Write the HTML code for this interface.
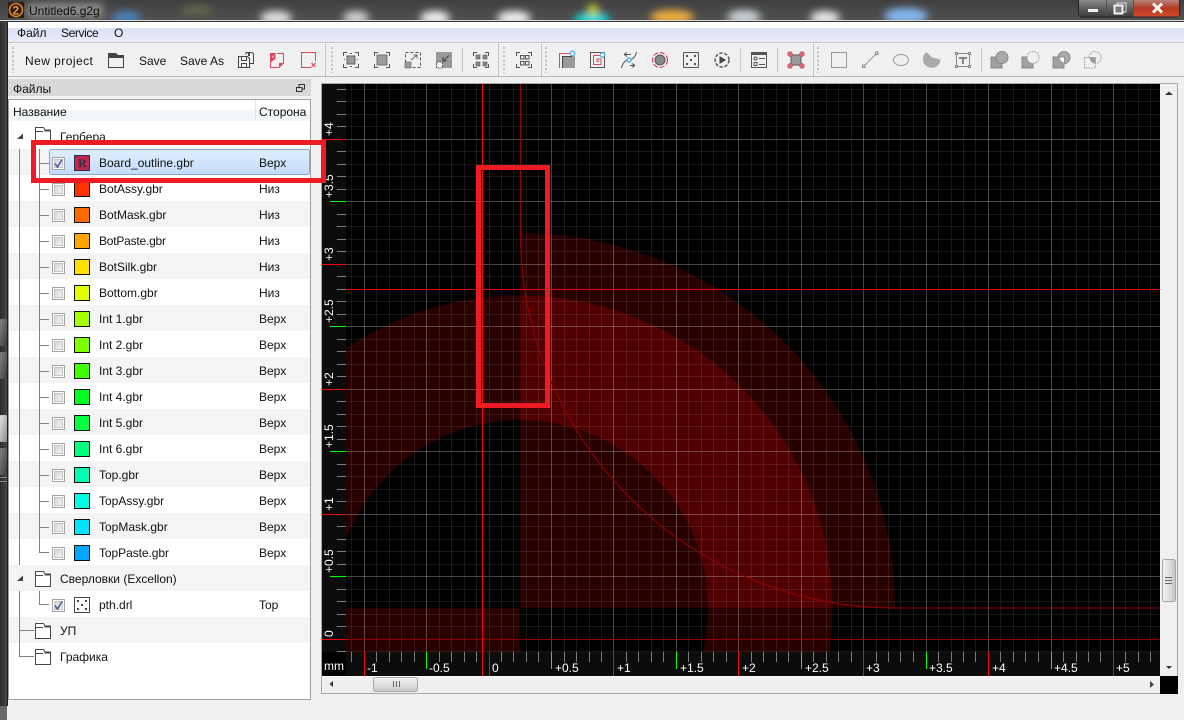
<!DOCTYPE html>
<html><head><meta charset="utf-8"><title>Untitled6.g2g</title>
<style>
html,body{margin:0;padding:0;background:#f0f0f0;width:1184px;height:720px;overflow:hidden}
svg{display:block;font-family:"Liberation Sans","Noto Sans CJK SC",sans-serif;font-size:12px}
</style></head><body>
<svg width="1184" height="720" viewBox="0 0 1184 720" xmlns="http://www.w3.org/2000/svg">
<defs>
<linearGradient id="tb" x1="0" y1="0" x2="0" y2="1"><stop offset="0" stop-color="#404040"/><stop offset="1" stop-color="#505050"/></linearGradient>
<linearGradient id="menu" x1="0" y1="0" x2="0" y2="1"><stop offset="0" stop-color="#fff"/><stop offset=".28" stop-color="#fff"/><stop offset=".32" stop-color="#dce1f3"/><stop offset="1" stop-color="#e9ecf8"/></linearGradient>
<linearGradient id="sel" x1="0" y1="0" x2="0" y2="1"><stop offset="0" stop-color="#e0eefd"/><stop offset="1" stop-color="#c2dcfc"/></linearGradient>
<linearGradient id="hd" x1="0" y1="0" x2="0" y2="1"><stop offset="0" stop-color="#fff"/><stop offset=".45" stop-color="#fff"/><stop offset=".5" stop-color="#f3f6f9"/><stop offset="1" stop-color="#f3f6f9"/></linearGradient>
<linearGradient id="cb" x1="0" y1="0" x2="1" y2="1"><stop offset="0" stop-color="#d4d4d4"/><stop offset="1" stop-color="#f4f4f4"/></linearGradient>
<linearGradient id="thH" x1="0" y1="0" x2="0" y2="1"><stop offset="0" stop-color="#f2f2f2"/><stop offset=".5" stop-color="#e0e0e0"/><stop offset="1" stop-color="#c8c8c8"/></linearGradient>
<linearGradient id="thV" x1="0" y1="0" x2="1" y2="0"><stop offset="0" stop-color="#f2f2f2"/><stop offset=".5" stop-color="#e0e0e0"/><stop offset="1" stop-color="#c4c4c4"/></linearGradient>
<linearGradient id="btn" x1="0" y1="0" x2="0" y2="1"><stop offset="0" stop-color="#8a8a8a"/><stop offset=".5" stop-color="#5f5f5f"/><stop offset="1" stop-color="#3e3e3e"/></linearGradient>
<linearGradient id="cls" x1="0" y1="0" x2="0" y2="1"><stop offset="0" stop-color="#b5827a"/><stop offset=".5" stop-color="#b63a24"/><stop offset="1" stop-color="#d24a2c"/></linearGradient>
<linearGradient id="lb" x1="0" y1="0" x2="1" y2="0"><stop offset="0" stop-color="#2c2c2c"/><stop offset="1" stop-color="#484848"/></linearGradient>
<linearGradient id="lbb" x1="0" y1="0" x2="1" y2="1"><stop offset="0" stop-color="#808080"/><stop offset="1" stop-color="#3c3c3c"/></linearGradient>
<linearGradient id="lbw" x1="0" y1="0" x2="1" y2="1"><stop offset="0" stop-color="#e4e4e4"/><stop offset="1" stop-color="#8a8a8a"/></linearGradient>
<filter id="bl" x="0" y="0" width="1184" height="40" filterUnits="userSpaceOnUse"><feGaussianBlur stdDeviation="4"/></filter>
<clipPath id="cTitle"><rect x="0" y="0" width="1184" height="20"/></clipPath>
<clipPath id="cCanvas"><rect x="346" y="84" width="814" height="568"/></clipPath>
<clipPath id="cTickB"><rect x="346" y="652" width="814" height="10"/></clipPath>
<clipPath id="cTickL"><rect x="337" y="84" width="9" height="568"/></clipPath>
<path id="vm" d="M351.5 84V676M376.5 84V676M389.5 84V676M401.5 84V676M414.5 84V676M439.5 84V676M451.5 84V676M464.5 84V676M476.5 84V676M501.5 84V676M513.5 84V676M526.5 84V676M538.5 84V676M564.5 84V676M576.5 84V676M589.5 84V676M601.5 84V676M626.5 84V676M638.5 84V676M651.5 84V676M663.5 84V676M688.5 84V676M701.5 84V676M713.5 84V676M726.5 84V676M751.5 84V676M763.5 84V676M776.5 84V676M788.5 84V676M813.5 84V676M826.5 84V676M838.5 84V676M851.5 84V676M876.5 84V676M888.5 84V676M900.5 84V676M913.5 84V676M938.5 84V676M951.5 84V676M963.5 84V676M975.5 84V676M1000.5 84V676M1013.5 84V676M1025.5 84V676M1038.5 84V676M1063.5 84V676M1076.5 84V676M1088.5 84V676M1100.5 84V676M1125.5 84V676M1138.5 84V676M1150.5 84V676"/>
<path id="hm" d="M322 89.5H1160M322 101.5H1160M322 114.5H1160M322 126.5H1160M322 151.5H1160M322 164.5H1160M322 176.5H1160M322 189.5H1160M322 214.5H1160M322 226.5H1160M322 239.5H1160M322 251.5H1160M322 276.5H1160M322 289.5H1160M322 301.5H1160M322 314.5H1160M322 339.5H1160M322 351.5H1160M322 364.5H1160M322 376.5H1160M322 401.5H1160M322 414.5H1160M322 426.5H1160M322 439.5H1160M322 464.5H1160M322 476.5H1160M322 489.5H1160M322 501.5H1160M322 526.5H1160M322 539.5H1160M322 551.5H1160M322 564.5H1160M322 589.5H1160M322 601.5H1160M322 614.5H1160M322 626.5H1160M322 651.5H1160"/>
<g id="fold" fill="none" stroke="#484848" stroke-width="1"><path d="M.5 15.5V3.5L.5 .5H8.5L10.5 3.5H15.5V15.5Z" fill="#fff"/><path d="M.5 4.5H8" /><rect x="9.5" y="2.5" width="6.5" height="2" fill="#484848" stroke="none"/></g>
<g id="cb0"><rect x=".5" y=".5" width="12" height="12" fill="#fff" stroke="#a4a4a4"/><rect x="2.5" y="2.5" width="8" height="8" fill="url(#cb)" stroke="#c4c4c4"/></g>
<g id="cb1"><use href="#cb0"/><path d="M3 6.5L5.5 10L10 2.5" fill="none" stroke="#4a60a8" stroke-width="1.6"/></g>
</defs>

<!-- base -->
<rect width="1184" height="720" fill="#f0f0f0"/>

<!-- title bar -->
<rect width="1184" height="20" fill="url(#tb)"/>
<g clip-path="url(#cTitle)"><g filter="url(#bl)">
<rect x="27" y="3" width="76" height="15" fill="#8a8a8a"/>
<ellipse cx="126" cy="18" rx="15" ry="7" fill="#4a80b8"/>
<ellipse cx="197" cy="10" rx="16" ry="4" fill="#6a6a50"/>
<ellipse cx="276" cy="18" rx="16" ry="7" fill="#e0e0e0"/>
<ellipse cx="356" cy="18" rx="13" ry="7" fill="#d0d0d0"/>
<ellipse cx="435" cy="18" rx="15" ry="7" fill="#f0f0f0"/>
<ellipse cx="514" cy="18" rx="17" ry="7" fill="#f0f0f0"/>
<ellipse cx="592" cy="19" rx="18" ry="6" fill="#10e0e0"/>
<ellipse cx="593" cy="10" rx="6" ry="6" fill="#c0c820"/>
<ellipse cx="672" cy="17" rx="22" ry="7" fill="#f0b040"/>
<ellipse cx="744" cy="17" rx="17" ry="7" fill="#ccd4d8"/>
<ellipse cx="825" cy="18" rx="15" ry="7" fill="#e8e8e8"/>
<ellipse cx="906" cy="16" rx="22" ry="8" fill="#84b8f0"/>
</g></g>
<rect x="0" y="20" width="1184" height="1" fill="#d8d8d8"/>
<rect x="0" y="21" width="1184" height="1" fill="#3a3a3a"/>
<rect x="8" y="2" width="16" height="16" fill="#2b1c0c"/>
<circle cx="16" cy="10" r="6.5" fill="none" stroke="#d9842a" stroke-width="1.6"/>
<text x="12.5" y="14.5" fill="#e89a3a" font-size="12" font-weight="bold">2</text>
<text x="29" y="15" fill="#0a0a0a">Untitled6.g2g</text>

<!-- window controls -->
<rect x="1078.5" y="-2" width="101" height="19" rx="3" fill="#555" stroke="#222"/>
<rect x="1079" y="0" width="27" height="16.500" fill="url(#btn)"/>
<rect x="1107" y="0" width="26" height="16.500" fill="url(#btn)"/>
<rect x="1134" y="0" width="45" height="16.500" fill="url(#cls)"/>
<rect x="1088" y="9" width="10" height="3" fill="#f2f2f2"/>
<rect x="1117" y="3" width="9" height="9" fill="none" stroke="#ddd" stroke-width="1"/>
<rect x="1114.500" y="5.500" width="8" height="8" fill="#7a7a7a" stroke="#f2f2f2" stroke-width="2"/>
<path d="M1153 3.500L1162 12.500M1162 3.500L1153 12.500" stroke="#f4f4f4" stroke-width="3"/>

<!-- left dark edge -->
<rect x="0" y="22" width="7" height="684" fill="url(#lb)"/>
<rect x="7" y="22" width="1" height="684" fill="#1e1e1e"/>
<rect x="0" y="319" width="7" height="27" rx="1" fill="url(#lbb)"/>
<rect x="0" y="352" width="7" height="27" rx="1" fill="url(#lbb)"/>
<rect x="0" y="415" width="7" height="27" rx="1" fill="url(#lbw)"/>
<rect x="0" y="448" width="7" height="27" rx="1" fill="url(#lbb)"/>
<rect x="0" y="477" width="7" height="1" fill="#888"/>
<rect x="0" y="481" width="7" height="1" fill="#888"/>
<rect x="0" y="706" width="7" height="14" fill="#6a6a6a"/>

<!-- menu -->
<rect x="8" y="22" width="1176" height="20" fill="url(#menu)"/>
<rect x="8" y="42" width="1176" height="1" fill="#c8c8c8"/>
<text x="17" y="37" fill="#111">Файл</text>
<text x="61" y="37" fill="#111" letter-spacing="-.4">Service</text>
<text x="114" y="37" fill="#111">О</text>

<!-- toolbar -->
<rect x="8" y="43" width="1176" height="33" fill="#f0f0f0"/>
<rect x="8" y="76" width="1176" height="1" fill="#b8b8b8"/>
<g stroke="#c4c4c4" stroke-width="2" stroke-dasharray="2 2.200" fill="none">
<path d="M13 47V73M332 47V73M504 47V73M546 47V73M818 47V73"/>
</g>
<g stroke="#c6c6c6" fill="none">
<path d="M325.500 43V76M498.500 43V76M541.500 43V76M813.500 43V76"/>
<path d="M462.500 48V72M740.500 48V72M777.500 48V72M981.500 48V72"/>
</g>
<text x="25" y="65" fill="#111" letter-spacing=".45">New project</text>
<text x="139" y="65" fill="#111">Save</text>
<text x="180" y="65" fill="#111">Save As</text>

<!-- open -->
<path d="M108.500 55.500H123.500V67.500H108.500Z" fill="none" stroke="#444"/>
<path d="M108 53H116L118 55H124V58H108Z" fill="#444"/>
<!-- save all -->
<g fill="none" stroke="#444"><path d="M246 54.500V52.500H252L253.500 54V63.500H250"/><path d="M238.500 56.500H247.500L249.500 58.500V67.500H238.500Z" fill="#f0f0f0"/><path d="M241.500 57V60.500H246.500V57M241.500 67V63.500H246.500V67"/></g>
<rect x="248" y="53" width="2" height="3" fill="#444"/>
<!-- new doc red -->
<path d="M277 53.500H283.500V63L279 67.500H270.500V61" fill="none" stroke="#d9485f"/>
<path d="M270 53H275.500V59L271 62H270Z" fill="#d9485f"/><path d="M272 58L274 55.500" stroke="#f0d0d0"/>
<path d="M279 67.500V63H284Z" fill="#d9485f"/>
<!-- close doc -->
<path d="M311 67.500H301.500V52.500H315.500V61" fill="none" stroke="#d9485f"/>
<path d="M311.500 63L315.500 67M315.500 63L311.500 67" stroke="#d9485f" stroke-width="1.200"/>

<!-- view icons -->
<g fill="none" stroke="#555">
<path d="M343.500 56V52.500H347M355 52.500H358.500V56M358.500 64V67.500H355M347 67.500H343.500V64"/>
<path d="M374.500 56V52.500H378M386 52.500H389.500V56M389.500 64V67.500H386M378 67.500H374.500V64"/>
<path d="M473.500 56V52.500H477M485 52.500H488.500V56M488.500 64V67.500H485M477 67.500H473.500V64"/>
<path d="M516.500 56V52.500H520M528 52.500H531.500V56M531.500 64V67.500H528M520 67.500H516.500V64"/>
<rect x="347" y="56" width="8" height="8" fill="#9a9a9a" stroke="#666"/>
<rect x="377" y="55" width="10" height="10" fill="#9a9a9a" stroke="#777" />
<rect x="405.500" y="52.500" width="15" height="15" stroke-dasharray="3 2"/>
<rect x="520.500" y="55.500" width="3.500" height="3.500"/><rect x="526.500" y="55.500" width="3.500" height="3.500" transform="translate(-1 0)"/>
<rect x="520.500" y="61.500" width="3.500" height="3.500"/><rect x="525.500" y="61.500" width="3.500" height="3.500"/>
</g>
<path d="M350 53.500H352M350 66.500H352M344.500 60V59M357.500 60V59" stroke="#666"/>
<rect x="405" y="62" width="6" height="6" fill="#999" stroke="#666" stroke-width=".6"/>
<path d="M411 60L417 55M413.500 55H417V58.500" fill="none" stroke="#666"/>
<rect x="436" y="52" width="16" height="16" fill="#999"/>
<path d="M449 55.500L443.500 60.500M443 57V61H447" fill="none" stroke="#444"/>
<rect x="436.500" y="62" width="6" height="6" fill="#f0f0f0" stroke="#555" stroke-dasharray="2 1"/>
<g fill="#888" stroke="#555" stroke-width=".6"><rect x="476" y="55" width="4" height="4"/><rect x="483" y="55" width="4" height="4"/><rect x="476" y="62" width="4" height="4"/><rect x="483" y="62" width="4" height="4"/></g>

<!-- G -->
<path d="M559.500 68V53.500H570" fill="none" stroke="#d9485f"/>
<rect x="562" y="56" width="13" height="12" fill="#9a9a9a"/>
<path d="M562.500 68V56.500H572" fill="none" stroke="#444"/>
<circle cx="572.500" cy="53.500" r="2.200" fill="#fff" stroke="#5ab4e6" stroke-width="1.500"/>
<!-- H -->
<rect x="590.500" y="52.500" width="14" height="15" fill="none" stroke="#555"/>
<path d="M602 55.500H593.500V64.500H601V59H597V61.500H599" fill="none" stroke="#d9485f"/>
<circle cx="602.500" cy="55" r="2.200" fill="#fff" stroke="#5ab4e6" stroke-width="1.500"/>
<!-- I -->
<path d="M621.500 68C623 62 626 60 629 60C633 59 635 58 636.500 52" fill="none" stroke="#555"/>
<path d="M624 54.500H631M624 54.500L627 52.500M624 54.500L627 56.500M630 65.500H635M635 65.500L632 63.500M635 65.500L632 67.500" fill="none" stroke="#555"/>
<circle cx="629" cy="60" r="2" fill="#fff" stroke="#5ab4e6" stroke-width="1.500"/>
<!-- J -->
<circle cx="660" cy="60" r="5" fill="#888" stroke="#555"/>
<circle cx="660" cy="60" r="7.500" fill="none" stroke="#d9485f" stroke-width="1.200" stroke-dasharray="5 2"/>
<!-- K -->
<rect x="683.500" y="52.500" width="15" height="15" rx="1" fill="none" stroke="#555"/>
<g fill="#444"><circle cx="687" cy="56" r="1.100"/><circle cx="695" cy="56" r="1.100"/><circle cx="691" cy="60" r="1.100"/><circle cx="687" cy="64" r="1.100"/><circle cx="695" cy="64" r="1.100"/></g>
<!-- L -->
<circle cx="722" cy="60" r="7" fill="none" stroke="#666" stroke-width="1.600" stroke-dasharray="3.500 1.500"/>
<path d="M719.500 56L726 60L719.500 64Z" fill="#444"/>
<!-- M -->
<rect x="751.500" y="52.500" width="15" height="15" fill="none" stroke="#555"/>
<rect x="751" y="52" width="16" height="3" fill="#555"/>
<circle cx="755.500" cy="58.500" r="1.500" fill="none" stroke="#555"/><rect x="754" y="62.500" width="3" height="3" fill="none" stroke="#555"/>
<path d="M759 58.500H765M759 64.500H765" stroke="#555"/>
<!-- N -->
<rect x="791" y="55" width="10" height="10" fill="#999" stroke="#555"/>
<g fill="#e06a7a" stroke="#c04458" stroke-width=".6"><circle cx="790" cy="54" r="2.400"/><circle cx="802" cy="54" r="2.400"/><circle cx="790" cy="66" r="2.400"/><circle cx="802" cy="66" r="2.400"/></g>

<!-- shapes -->
<rect x="831.500" y="52.500" width="15" height="15" fill="none" stroke="#999"/>
<path d="M863.500 66.500L876.500 53.500" stroke="#999"/><rect x="862.500" y="65" width="2.500" height="2.500" fill="#f0f0f0" stroke="#888"/><rect x="875.500" y="52" width="2.500" height="2.500" fill="#f0f0f0" stroke="#888"/>
<ellipse cx="901" cy="60" rx="7.500" ry="5.500" fill="none" stroke="#999"/>
<path d="M926.500 52A8.800 8.800 0 1 0 940.500 59.500L932 57.500Z" fill="#aaa"/>
<rect x="956.500" y="53.500" width="13" height="13" fill="none" stroke="#888"/>
<g fill="#f0f0f0" stroke="#888"><rect x="955.500" y="52.500" width="2" height="2"/><rect x="968.500" y="52.500" width="2" height="2"/><rect x="955.500" y="65.500" width="2" height="2"/><rect x="968.500" y="65.500" width="2" height="2"/></g>
<path d="M959 57H967V59H964V64H962V59H959Z" fill="#888"/>

<rect x="991" y="57" width="11" height="11" fill="#a0a0a0" stroke="#888"/>
<circle cx="1002" cy="57.500" r="6" fill="#aaa" stroke="#888"/>
<rect x="1022" y="57" width="11" height="11" fill="#a0a0a0" stroke="#888"/>
<circle cx="1033" cy="57.500" r="6" fill="#f0f0f0" stroke="#999" stroke-dasharray="1.500 1.200"/>
<circle cx="1064" cy="57.500" r="6" fill="#aaa" stroke="#888"/>
<rect x="1053" y="57" width="11" height="11" fill="#a0a0a0" stroke="#888"/>
<path d="M1060 57.500H1064V62.500A6 6 0 0 1 1060 59Z" fill="#fff"/>
<circle cx="1095" cy="57.500" r="6" fill="#f0f0f0" stroke="#999" stroke-dasharray="1.500 1.200"/>
<rect x="1084.500" y="57.500" width="11" height="10.500" fill="#f0f0f0" stroke="#999" stroke-dasharray="1.500 1.200"/>
<path d="M1089.500 57.500H1095.500V63.500A6 6 0 0 1 1089.500 57.500Z" fill="#999"/>

<!-- dock title -->
<rect x="8" y="79" width="303" height="17" fill="#d8d8d8"/>
<text x="13" y="93" fill="#111">Файлы</text>
<rect x="299" y="84.500" width="5.500" height="4.500" fill="none" stroke="#333"/>
<rect x="296.500" y="87.500" width="5.500" height="4" fill="#d8d8d8" stroke="#333"/>

<!-- tree -->
<rect x="8.500" y="99.500" width="302" height="600" fill="#fff" stroke="#a0a0a0"/>
<rect x="9" y="100" width="301" height="21" fill="url(#hd)"/>
<rect x="255" y="100" width="1" height="21" fill="#e2e6ea"/>
<text x="13" y="116" fill="#111">Название</text>
<text x="259" y="116" fill="#111">Сторона</text>

<g fill="#f4f4f4">
<rect x="9" y="149" width="301" height="26"/><rect x="9" y="201" width="301" height="26"/><rect x="9" y="253" width="301" height="26"/><rect x="9" y="305" width="301" height="26"/><rect x="9" y="357" width="301" height="26"/><rect x="9" y="409" width="301" height="26"/><rect x="9" y="461" width="301" height="26"/><rect x="9" y="513" width="301" height="26"/><rect x="9" y="565" width="301" height="26"/><rect x="9" y="617" width="301" height="26"/>
</g>
<rect x="49.500" y="149.500" width="260" height="25" rx="2" fill="url(#sel)" stroke="#84a9d4"/>

<g stroke="#808080" fill="none">
<path d="M19.500 149V565M19.500 591V656.500H34M19.500 630.500H34M39.500 149V552.500H49M39.500 591V604.500H49"/>
<path d="M40 163.500H49M40 189.500H49M40 215.500H49M40 241.500H49M40 267.500H49M40 293.500H49M40 319.500H49M40 345.500H49M40 371.500H49M40 397.500H49M40 423.500H49M40 449.500H49M40 475.500H49M40 501.500H49M40 527.500H49"/>
</g>
<path d="M17 139L23 133.500V139Z" fill="#444"/>
<path d="M17 581L23 575.500V581Z" fill="#444"/>

<use href="#fold" x="35" y="127"/><use href="#fold" x="35" y="571"/><use href="#fold" x="35" y="623"/><use href="#fold" x="35" y="649"/>
<g fill="#111">
<text x="60" y="141">Гербера</text>
<text x="60" y="583">Сверловки (Excellon)</text>
<text x="60" y="635">УП</text>
<text x="60" y="661">Графика</text>
</g>

<use href="#cb1" x="52" y="157"/><use href="#cb0" x="52" y="183"/><use href="#cb0" x="52" y="209"/><use href="#cb0" x="52" y="235"/><use href="#cb0" x="52" y="261"/><use href="#cb0" x="52" y="287"/><use href="#cb0" x="52" y="313"/><use href="#cb0" x="52" y="339"/><use href="#cb0" x="52" y="365"/><use href="#cb0" x="52" y="391"/><use href="#cb0" x="52" y="417"/><use href="#cb0" x="52" y="443"/><use href="#cb0" x="52" y="469"/><use href="#cb0" x="52" y="495"/><use href="#cb0" x="52" y="521"/><use href="#cb0" x="52" y="547"/><use href="#cb1" x="52" y="599"/>

<g stroke="#111">
<rect x="74.500" y="155.500" width="15" height="15" fill="#c0284f" stroke="#27324f"/>
<rect x="74.500" y="181.500" width="15" height="15" fill="#ff3300"/>
<rect x="74.500" y="207.500" width="15" height="15" fill="#ff6a00"/>
<rect x="74.500" y="233.500" width="15" height="15" fill="#ffa500"/>
<rect x="74.500" y="259.500" width="15" height="15" fill="#ffdf00"/>
<rect x="74.500" y="285.500" width="15" height="15" fill="#e2ff00"/>
<rect x="74.500" y="311.500" width="15" height="15" fill="#a4ff00"/>
<rect x="74.500" y="337.500" width="15" height="15" fill="#80ff00"/>
<rect x="74.500" y="363.500" width="15" height="15" fill="#40ff00"/>
<rect x="74.500" y="389.500" width="15" height="15" fill="#00ff20"/>
<rect x="74.500" y="415.500" width="15" height="15" fill="#00ff40"/>
<rect x="74.500" y="441.500" width="15" height="15" fill="#00ff80"/>
<rect x="74.500" y="467.500" width="15" height="15" fill="#00ffb0"/>
<rect x="74.500" y="493.500" width="15" height="15" fill="#00ffe0"/>
<rect x="74.500" y="519.500" width="15" height="15" fill="#00e4ff"/>
<rect x="74.500" y="545.500" width="15" height="15" fill="#00a8ff"/>
<rect x="74.500" y="597.500" width="15" height="15" fill="#fff" stroke="#444"/>
</g>
<text x="78" y="167" fill="#27324f" font-family="Liberation Serif,serif" font-weight="bold" font-size="12">R</text>
<g fill="#333"><circle cx="78" cy="601" r="1.100"/><circle cx="86" cy="601" r="1.100"/><circle cx="82" cy="605" r="1.100"/><circle cx="78" cy="609" r="1.100"/><circle cx="86" cy="609" r="1.100"/></g>

<g fill="#111">
<text x="99" y="167">Board_outline.gbr</text><text x="259" y="167">Верх</text>
<text x="99" y="193">BotAssy.gbr</text><text x="259" y="193">Низ</text>
<text x="99" y="219">BotMask.gbr</text><text x="259" y="219">Низ</text>
<text x="99" y="245" textLength="67">BotPaste.gbr</text><text x="259" y="245">Низ</text>
<text x="99" y="271">BotSilk.gbr</text><text x="259" y="271">Низ</text>
<text x="99" y="297">Bottom.gbr</text><text x="259" y="297">Низ</text>
<text x="99" y="323">Int 1.gbr</text><text x="259" y="323">Верх</text>
<text x="99" y="349">Int 2.gbr</text><text x="259" y="349">Верх</text>
<text x="99" y="375">Int 3.gbr</text><text x="259" y="375">Верх</text>
<text x="99" y="401">Int 4.gbr</text><text x="259" y="401">Верх</text>
<text x="99" y="427">Int 5.gbr</text><text x="259" y="427">Верх</text>
<text x="99" y="453">Int 6.gbr</text><text x="259" y="453">Верх</text>
<text x="99" y="479">Top.gbr</text><text x="259" y="479">Верх</text>
<text x="99" y="505">TopAssy.gbr</text><text x="259" y="505">Верх</text>
<text x="99" y="531">TopMask.gbr</text><text x="259" y="531">Верх</text>
<text x="99" y="557" textLength="70">TopPaste.gbr</text><text x="259" y="557">Верх</text>
<text x="99" y="609">pth.drl</text><text x="259" y="609">Top</text>
</g>

<!-- canvas frame -->
<rect x="321.500" y="83.500" width="856" height="610" fill="#f0f0f0" stroke="#a8a8a8"/>
<rect x="322" y="84" width="838" height="592" fill="#000"/>

<g clip-path="url(#cCanvas)">
<path d="M520 608V233A375 375 0 0 1 895 608Z" fill="#280000"/>
<path d="M346 348.100A312.500 312.500 0 0 1 520 295.500V420A188 188 0 0 0 346 538.800Z" fill="#280000"/>
<path d="M832.500 608A312.500 312.500 0 0 1 829.400 652H702.800A188 188 0 0 0 708 608Z" fill="#280000"/>
<path d="M520 295.500A312.500 312.500 0 0 1 832.500 608H708A188 188 0 0 0 520 420Z" fill="#500000"/>
<rect x="346" y="608" width="174" height="44" fill="#280000"/>
<use href="#vm" stroke="#fff" stroke-opacity=".09" fill="none"/>
<use href="#hm" stroke="#fff" stroke-opacity=".09" fill="none"/>
<path d="M364.500 84V652M426.500 84V652M551.500 84V652M613.500 84V652M676.500 84V652M738.500 84V652M801.500 84V652M863.500 84V652M926.500 84V652M988.500 84V652M1051.500 84V652M1113.500 84V652" stroke="#fff" stroke-opacity=".27" fill="none"/>
<path d="M346 139.500H1160M346 201.500H1160M346 264.500H1160M346 326.500H1160M346 389.500H1160M346 451.500H1160M346 514.500H1160M346 576.500H1160" stroke="#fff" stroke-opacity=".27" fill="none"/>
<path d="M489.500 84V652" stroke="#7a0000" fill="none"/>
<path d="M346 639.500H1160" stroke="#8a0000" fill="none"/>
<path d="M346 289.500H1160" stroke="#e60000" fill="none"/>
<path d="M520.500 84V233A375 375 0 0 0 895 608H1160" stroke="#980000" fill="none"/>
</g>

<!-- rulers -->
<rect x="322" y="84" width="24" height="568" fill="#0c0c0c"/>
<rect x="322" y="652" width="838" height="24" fill="#0c0c0c"/>
<rect x="322" y="652" width="24" height="24" fill="#000"/>
<use href="#vm" stroke="#7c7c7c" fill="none" clip-path="url(#cTickB)"/>
<use href="#hm" stroke="#7c7c7c" fill="none" clip-path="url(#cTickL)"/>
<path d="M364.500 652V676M489.500 652V676M613.500 652V676M738.500 652V676M863.500 652V676M988.500 652V676M1113.500 652V676" stroke="#ff0000" fill="none"/>
<path d="M426.500 652V669M551.500 652V669M676.500 652V669M801.500 652V669M926.500 652V669M1051.500 652V669" stroke="#00ff00" fill="none"/>
<path d="M322 139.500H346M322 264.500H346M322 389.500H346M322 514.500H346M322 639.500H346" stroke="#ff0000" fill="none"/>
<path d="M330 201.500H346M330 326.500H346M330 451.500H346M330 576.500H346" stroke="#00ff00" fill="none"/>
<path d="M482.500 84V676" stroke="#ff0000" fill="none"/>

<g fill="#fff">
<text x="324" y="670">mm</text>
<text x="367" y="672">-1</text><text x="429" y="672">-0.5</text><text x="492" y="672">0</text><text x="555" y="672">+0.5</text><text x="617" y="672">+1</text><text x="680" y="672">+1.5</text><text x="742" y="672">+2</text><text x="805" y="672">+2.5</text><text x="866" y="672">+3</text><text x="929" y="672">+3.5</text><text x="992" y="672">+4</text><text x="1054" y="672">+4.5</text><text x="1116" y="672">+5</text>
<text transform="translate(333,136) rotate(-90)">+4</text>
<text transform="translate(333,198) rotate(-90)">+3.5</text>
<text transform="translate(333,261) rotate(-90)">+3</text>
<text transform="translate(333,323) rotate(-90)">+2.5</text>
<text transform="translate(333,386) rotate(-90)">+2</text>
<text transform="translate(333,448) rotate(-90)">+1.5</text>
<text transform="translate(333,511) rotate(-90)">+1</text>
<text transform="translate(333,573) rotate(-90)">+0.5</text>
<text transform="translate(333,637) rotate(-90)">0</text>
</g>

<!-- scrollbars -->
<rect x="1161" y="84" width="16" height="592" fill="#f0f0f0"/>
<rect x="322" y="677" width="838" height="16" fill="#efefef"/>
<rect x="322" y="676" width="838" height="1" fill="#fff"/>
<rect x="1160" y="676" width="18" height="18" fill="#000"/>
<path d="M1165 95L1169 91.500L1173 95Z" fill="#333"/>
<path d="M1166 666H1172L1169 669Z" fill="#333"/>
<path d="M333 681V687L329.500 684Z" fill="#333"/>
<path d="M1150 681V688L1154 684.500Z" fill="#444"/>
<rect x="1162.500" y="559.500" width="13" height="42" rx="2" fill="url(#thV)" stroke="#a8a8a8"/>
<path d="M1165 577.500H1172M1165 580.500H1172M1165 583.500H1172" stroke="#666"/>
<rect x="373.500" y="677.500" width="44" height="14" rx="2" fill="url(#thH)" stroke="#a8a8a8"/>
<path d="M393.500 681V687M396.500 681V687M399.500 681V687" stroke="#666"/>

<!-- annotations -->
<rect x="33.500" y="142.500" width="290" height="38" fill="none" stroke="#ed1c24" stroke-width="5"/>
<rect x="478.500" y="167.500" width="69" height="238" fill="none" stroke="#ed1c24" stroke-width="5"/>
</svg>
</body></html>
